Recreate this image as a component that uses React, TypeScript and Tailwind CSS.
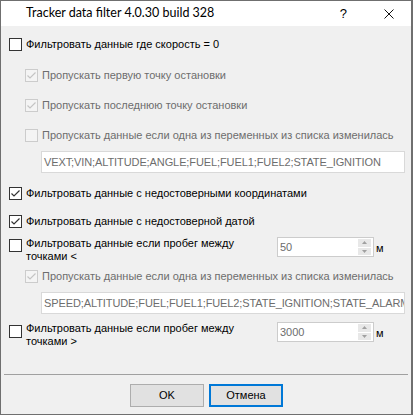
import React from "react";

const FONT = '"Liberation Sans", Arial, sans-serif';

function Box({ checked, disabled }: { checked?: boolean; disabled?: boolean }) {
  return (
    <div
      className={
        "w-[13px] h-[13px] shrink-0 border " +
        (disabled ? "border-[#cccccc] bg-[#f4f4f4]" : "border-[#333333] bg-white")
      }
    >
      {checked && (
        <svg width="11" height="11" viewBox="0 0 11 11" className="block">
          <polyline
            points="1.5,5.5 4,8 9.5,2.5"
            fill="none"
            stroke={disabled ? "#c4c4c4" : "#333333"}
            strokeWidth="1.2"
          />
        </svg>
      )}
    </div>
  );
}

function Row({
  checked,
  disabled,
  label,
  indent,
  mt,
}: {
  checked?: boolean;
  disabled?: boolean;
  label: string;
  indent?: boolean;
  mt: string;
}) {
  return (
    <div className={"flex items-center h-[13px] " + mt + (indent ? " pl-[24px]" : " pl-[8px]")}>
      <Box checked={checked} disabled={disabled} />
      <span
        className={
          "ml-[4px] text-[11px] leading-[13px] whitespace-nowrap " +
          (disabled ? "text-[#6d6d6d]" : "text-black")
        }
      >
        {label}
      </span>
    </div>
  );
}

function TextField({ value, mt }: { value: string; mt: string }) {
  return (
    <div
      className={
        "ml-[40px] w-[364px] h-[22px] border border-[#d9d9d9] bg-white flex items-center overflow-hidden pl-[2px] " +
        mt
      }
    >
      <span className="text-[11px] leading-[13px] tracking-[-0.1px] text-[#6d6d6d] whitespace-nowrap">
        {value}
      </span>
    </div>
  );
}

function Spin({ value }: { value: string }) {
  return (
    <div className="flex items-center">
      <div className="w-[97px] h-[20px] border border-[#cccccc] bg-white flex items-center justify-between pl-[2px] pr-[2px]">
        <span className="text-[11px] leading-[13px] text-[#6d6d6d]">{value}</span>
        <div className="flex flex-col w-[13px] h-[16px] gap-[1px]">
          <div className="flex-1 bg-[#e8e8e8] flex items-center justify-center">
            <svg width="5" height="3" viewBox="0 0 5 3">
              <polygon points="0,3 5,3 2.5,0" fill="#a0a0a0" />
            </svg>
          </div>
          <div className="flex-1 bg-[#e8e8e8] flex items-center justify-center">
            <svg width="5" height="3" viewBox="0 0 5 3">
              <polygon points="0,0 5,0 2.5,3" fill="#a0a0a0" />
            </svg>
          </div>
        </div>
      </div>
      <span className="ml-[2px] mt-[2px] text-[11px] leading-[13px] text-black">м</span>
    </div>
  );
}

function TwoLineRow({ label2, value, mt, boxMt }: { label2: string; value: string; mt: string; boxMt: string }) {
  return (
    <div className={"flex items-start pl-[8px] " + mt}>
      <div className={boxMt}>
        <Box />
      </div>
      <div className="ml-[4px] w-[251px] text-[11px] leading-[13px] text-black">
        <div>Фильтровать данные если пробег между</div>
        <div>{label2}</div>
      </div>
      <Spin value={value} />
    </div>
  );
}

export default function App() {
  return (
    <div
      className="w-[413px] h-[415px] bg-[#f0f0f0] border border-[#6f6f6f] border-r-2 flex flex-col overflow-hidden"
      style={{ fontFamily: FONT }}
    >
      <div className="h-[25px] bg-white flex items-center shrink-0">
        <span
          className="ml-[25px] text-[12.5px] text-black whitespace-nowrap"
          style={{ fontFamily: 'Lato, "Noto Sans", sans-serif' }}
        >
          Tracker data filter 4.0.30 build 328
        </span>
        <span className="ml-auto text-[13px] text-black mr-[37px]">?</span>
        <svg width="10" height="10" viewBox="0 0 10 10" className="mr-[17px]">
          <path d="M0.5 0.5 L9.5 9.5 M9.5 0.5 L0.5 9.5" stroke="#111" strokeWidth="1" />
        </svg>
      </div>

      <Row mt="mt-[12px]" label="Фильтровать данные где скорость = 0" />
      <Row mt="mt-[18px]" indent checked disabled label="Пропускать первую точку остановки" />
      <Row mt="mt-[17px]" indent checked disabled label="Пропускать последнюю точку остановки" />
      <Row mt="mt-[17px]" indent disabled label="Пропускать данные если одна из переменных из списка изменилась" />
      <TextField mt="mt-[9px]" value="VEXT;VIN;ALTITUDE;ANGLE;FUEL;FUEL1;FUEL2;STATE_IGNITION" />
      <Row mt="mt-[14px]" checked label="Фильтровать данные с недостоверными координатами" />
      <Row mt="mt-[15px]" checked label="Фильтровать данные с недостоверной датой" />
      <TwoLineRow mt="mt-[9px]" boxMt="mt-[2px]" label2="точками <" value="50" />
      <Row mt="mt-[7px]" indent checked disabled label="Пропускать данные если одна из переменных из списка изменилась" />
      <TextField mt="mt-[9px]" value="SPEED;ALTITUDE;FUEL;FUEL1;FUEL2;STATE_IGNITION;STATE_ALARM" />
      <TwoLineRow mt="mt-[8px]" boxMt="mt-[3px]" label2="точками >" value="3000" />

      <div className="mt-[26px] mx-[3px] h-px bg-[#a0a0a0]" />

      <div className="mt-[9px] flex pl-[129px] gap-[5px]">
        <div className="w-[74px] h-[23px] border border-[#adadad] bg-[#e1e1e1] flex items-center justify-center text-[11px] text-black">
          OK
        </div>
        <div className="w-[74px] h-[23px] border-2 border-[#0078d7] bg-[#e1e1e1] flex items-center justify-center text-[11px] text-black">
          Отмена
        </div>
      </div>
    </div>
  );
}
